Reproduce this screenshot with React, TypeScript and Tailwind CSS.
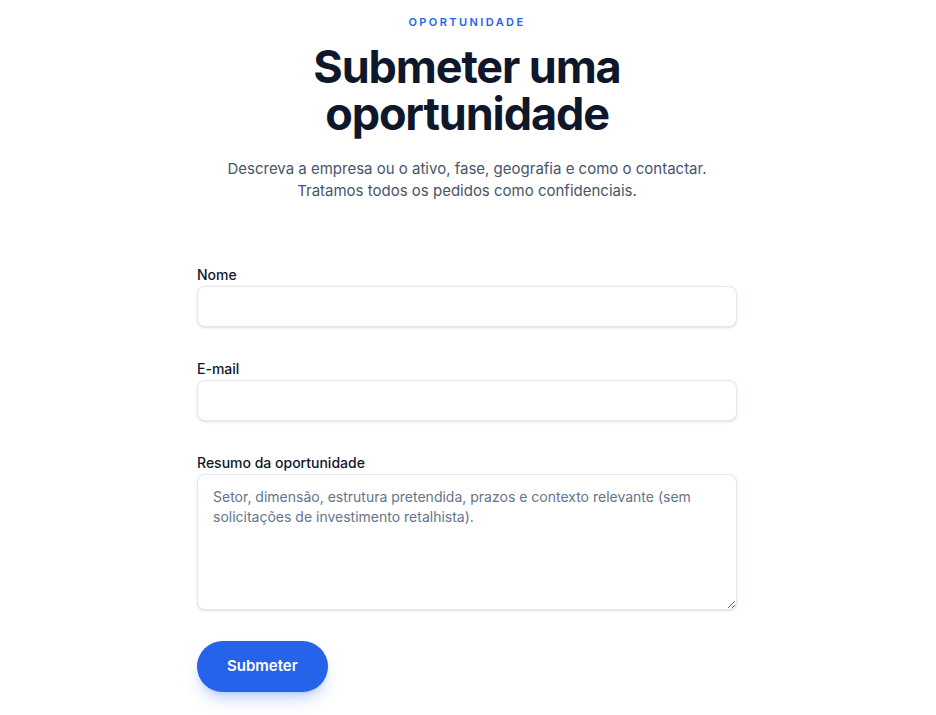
import React from "react";

export default function App() {
  return (
    <div className="min-h-screen bg-white" style={{ fontFamily: "Inter, 'Noto Sans', sans-serif" }}>
      <div className="mx-auto flex max-w-[540px] -translate-x-px flex-col items-center pt-[14px] pb-6">
        <p className="text-[11px] font-semibold uppercase leading-4 tracking-[0.22em] text-[#2563eb]">Oportunidade</p>
        <h1 className="mt-[13px] max-w-[420px] text-center text-[45px] font-bold leading-[47px] tracking-tight text-[#0f172a]">
          Submeter uma oportunidade
        </h1>
        <p className="mt-[21px] text-center text-[15px] leading-[22px] text-[#475569]">
          Descreva a empresa ou o ativo, fase, geografia e como o contactar.
          <br />
          Tratamos todos os pedidos como confidenciais.
        </p>
        <form className="mt-[63px] flex w-full flex-col gap-8" onSubmit={(e) => e.preventDefault()}>
          <div className="flex flex-col gap-px">
            <label className="text-sm font-medium leading-5 text-[#0f172a]">Nome</label>
            <input type="text" className="h-[41px] w-full rounded-lg border border-[#e2e8f0] bg-white px-4 text-sm shadow-sm outline-none" />
          </div>
          <div className="flex flex-col gap-px">
            <label className="text-sm font-medium leading-5 text-[#0f172a]">E-mail</label>
            <input type="email" className="h-[41px] w-full rounded-lg border border-[#e2e8f0] bg-white px-4 text-sm shadow-sm outline-none" />
          </div>
          <div className="flex flex-col gap-px">
            <label className="text-sm font-medium leading-5 text-[#0f172a]">Resumo da oportunidade</label>
            <textarea
              className="h-[136px] w-full rounded-lg border border-[#e2e8f0] bg-white px-[15px] py-3 text-sm leading-5 text-[#0f172a] shadow-sm outline-none placeholder:text-[#64748b]"
              placeholder="Setor, dimensão, estrutura pretendida, prazos e contexto relevante (sem solicitações de investimento retalhista)."
            />
          </div>
          <div className="-mt-px">
            <button type="submit" className="h-[51px] rounded-full bg-[#2563eb] px-[30px] text-[15px] font-semibold text-white shadow-lg shadow-[#2563eb]/25">
              Submeter
            </button>
          </div>
        </form>
      </div>
    </div>
  );
}
